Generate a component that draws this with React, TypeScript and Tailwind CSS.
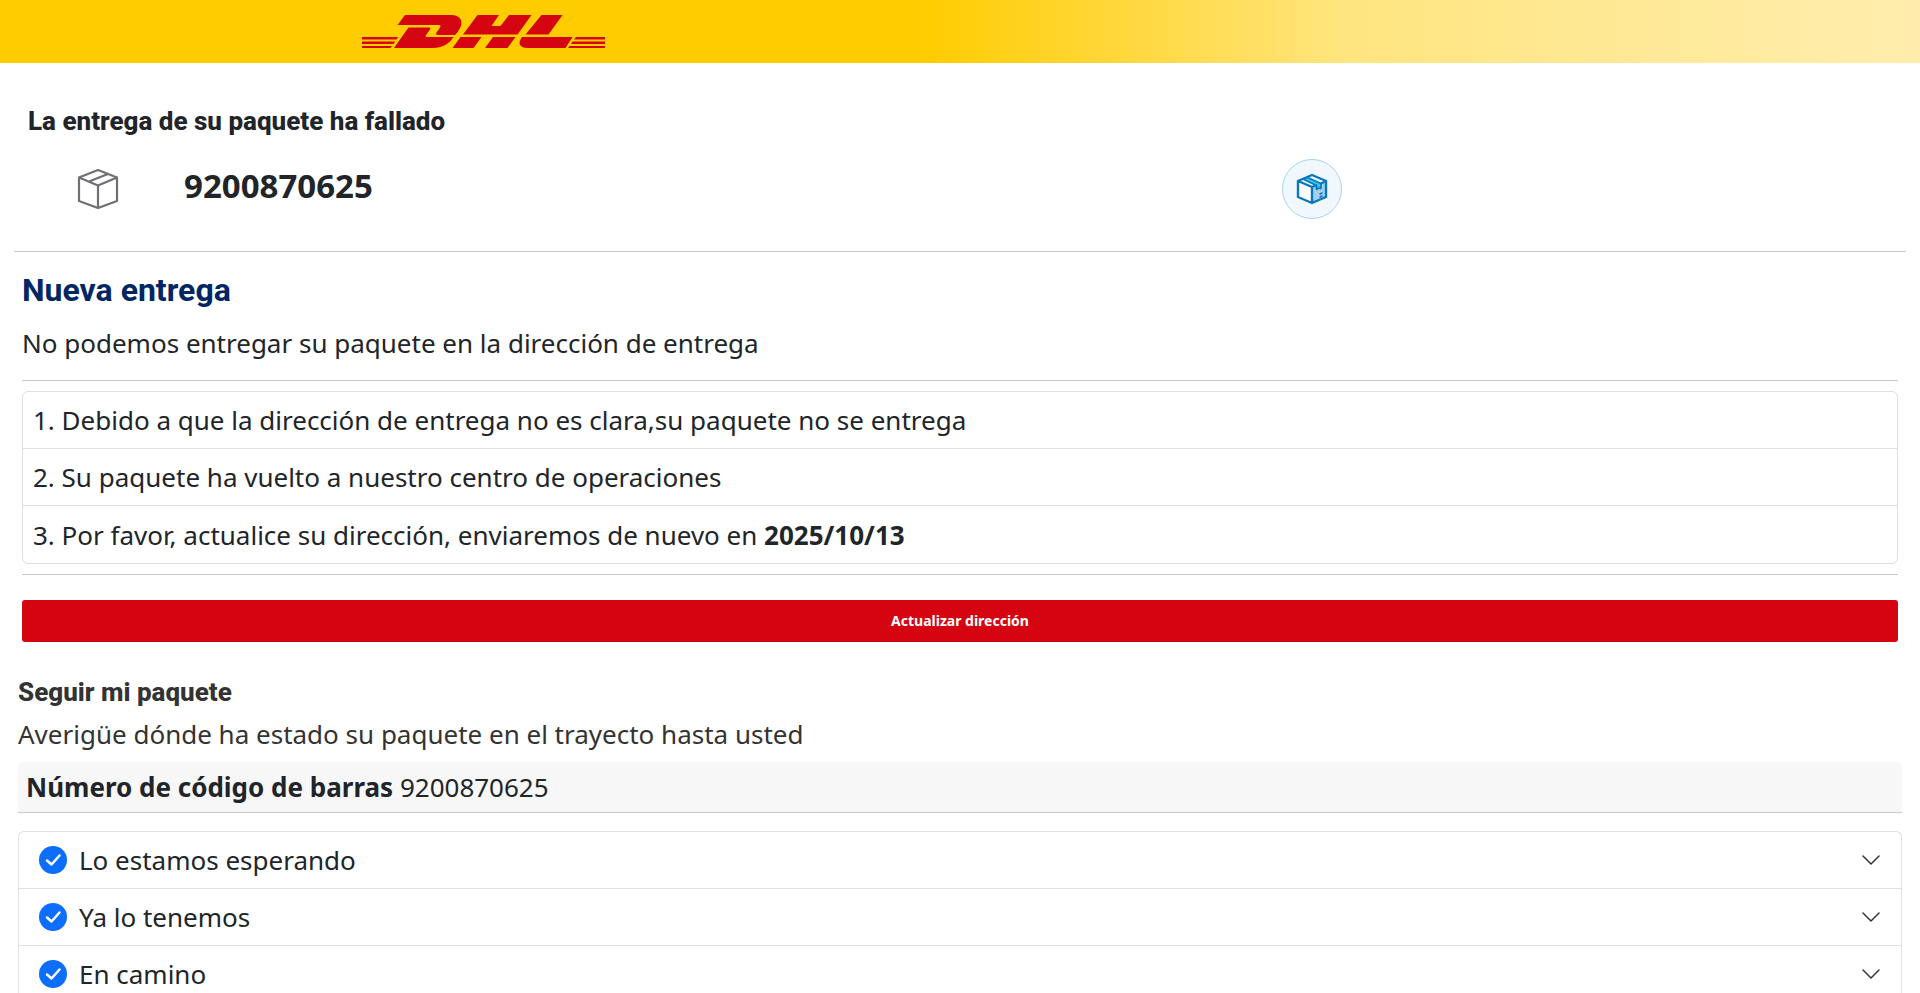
import { useState } from 'react'

interface Step {
  id: string
  title: string
}

const trackingNumber = '9200870625'

const steps: Step[] = [
  { id: 'waiting', title: 'Lo estamos esperando' },
  { id: 'received', title: 'Ya lo tenemos' },
  { id: 'transit', title: 'En camino' },
]

function Logo() {
  return (
    <svg className="block h-[34px] w-[244px]" viewBox="0 0 244 34" fill="#d40511" role="img" aria-label="DHL">
      <path d="M43 0H89C99 0 101.500 7 98 13C96.500 16 95 18 93 20H76C74 20 73.500 19 74.500 17.500L78 12.500C79 11 78.500 10 77 10H35.500Z" />
      <path d="M46.500 12.500H67C68.500 12.500 68.500 13.500 68 14.500L64 20C63 21.500 63.500 22 65.500 22H91.500C87 29 80 33 71 33H32Z" />
      <path d="M115.500 0H137L129.500 11H138.500L147 0H169.500L155.500 19.500H101Z" />
      <path d="M98.500 22H119.500L111.500 33H90.500Z" />
      <path d="M131 22H153.500L145.500 33H123Z" />
      <path d="M179.500 0H200.500L186.500 19.500H163.500Z" />
      <path d="M160 22H210.500L203.500 33H166C157 33 155.500 28 160 22Z" />
      <path d="M0 22H36L34.500 24.500H0ZM0 26.500H33L31.500 29H0ZM0 31H30L28.500 33H0Z" />
      <path d="M214 22H243V24.500H212ZM210.500 26.500H243V29H209ZM207.500 31H243V33H206Z" />
    </svg>
  )
}

function BoxIcon() {
  return (
    <svg className="h-10 w-[42px]" viewBox="0 0 42 40" fill="none" stroke="#6f7073" strokeWidth="2.200" strokeLinejoin="round">
      <path d="M21 1L40 8.500V32L21 39L2 32V8.500Z" />
      <path d="M2 8.500L21 16.500L40 8.500M21 16.500V39M12 12.500L31 5" />
    </svg>
  )
}

function BlueBoxIcon() {
  return (
    <svg className="h-8 w-8" viewBox="0 0 32 32" fill="none" strokeLinejoin="round" strokeLinecap="round">
      <path d="M2 8L16 14V30L2 24Z" fill="#fff" />
      <path d="M16 14L30 8V24L16 30Z" fill="#a5d0ec" />
      <path d="M6.500 6.500L11 4.500L25 11V15L22.500 14L20.500 15.500V13Z" fill="#2fc7ee" />
      <path d="M16 2L30 8V24L16 30L2 24V8ZM2 8L16 14L20 12.500M25 10.500L30 8M16 14V30" stroke="#0b76bc" strokeWidth="2.400" />
      <path d="M7 6L20.500 12.500V16.500L22.500 15L25 15.500V10.500L11.500 4.500" stroke="#0b76bc" strokeWidth="1.600" />
      <path d="M24 21L26 20M24 24L26 23" stroke="#0b76bc" strokeWidth="1.500" />
    </svg>
  )
}

function CheckIcon() {
  return (
    <svg className="h-7 w-7 shrink-0" viewBox="0 0 28 28" fill="none">
      <circle cx="14" cy="14" r="14" fill="#0d6efd" />
      <path d="M8 14.500L12.500 18.500L20.500 9.500" stroke="#fff" strokeWidth="2.500" strokeLinecap="round" strokeLinejoin="round" />
    </svg>
  )
}

function StepRow({ step }: { step: Step }) {
  const [isOpen, setIsOpen] = useState(false)

  return (
    <li className="border-b border-[#dfdfdf]">
      <button
        type="button"
        aria-expanded={isOpen}
        onClick={() => setIsOpen(!isOpen)}
        className="flex h-14 w-full items-center gap-3 pr-5 pl-5 text-left"
      >
        <CheckIcon />
        <span className="flex-1">{step.title}</span>
        <svg
          className={`h-5 w-5 ${isOpen ? 'rotate-180' : 'rotate-0'}`}
          viewBox="0 0 20 20"
          fill="none"
          stroke="#333"
          strokeWidth="1.500"
          strokeLinecap="round"
          strokeLinejoin="round"
        >
          <path d="M2 6L10 14L18 6" />
        </svg>
      </button>
    </li>
  )
}

export default function App() {
  return (
    <div className="bg-white font-['Noto_Sans',sans-serif] text-[26px] leading-10 text-[#212529]">
      <header className="flex h-[63px] items-start bg-[linear-gradient(90deg,#ffcc00_0%,#ffcc00_48%,#ffe57f_70%,#ffedae_100%)] pt-[15px] pl-[362px]">
        <Logo />
      </header>

      <main>
        <section className="mx-3.5 border-b border-[#c8c8c8] pt-[38px] pb-8">
          <h1 className="pl-3.5 font-[Roboto,sans-serif] text-[26px] font-extrabold">La entrega de su paquete ha fallado</h1>
          <div className="mt-[18px] flex h-[60px] items-center">
            <div className="flex w-[170px] pl-[63px]">
              <BoxIcon />
            </div>
            <strong className="flex-1 pb-1.5 text-[33px] font-bold">{trackingNumber}</strong>
            <div className="w-[33%]">
              <div className="flex h-[60px] w-[60px] items-center justify-center rounded-full border border-[#a9d3ea] bg-[#f1f8fd]">
                <BlueBoxIcon />
              </div>
            </div>
          </div>
        </section>

        <section className="mx-[22px] pt-[18px]">
          <h2 className="font-[Roboto,sans-serif] text-[32px] font-bold text-[#002663]">Nueva entrega</h2>
          <p className="mt-[13px] border-b border-[#c8c8c8] pb-[17px]">No podemos entregar su paquete en la dirección de entrega</p>
          <ol className="my-2.5 rounded-md border border-[#dfdfdf]">
            <li className="border-b border-[#dfdfdf] px-2.5 py-2">1. Debido a que la dirección de entrega no es clara,su paquete no se entrega</li>
            <li className="border-b border-[#dfdfdf] px-2.5 py-2">2. Su paquete ha vuelto a nuestro centro de operaciones</li>
            <li className="px-2.5 pt-[9px] pb-2">
              3. Por favor, actualice su dirección, enviaremos de nuevo en <b>2025/10/13</b>
            </li>
          </ol>
          <hr className="border-[#c8c8c8]" />
          <button type="button" className="mt-[25px] block h-[42px] w-full rounded-[3px] bg-[#d40511] text-sm font-bold text-white">
            Actualizar dirección
          </button>
        </section>

        <section className="mx-[18px] pt-[30px] text-[#333]">
          <h2 className="font-[Roboto,sans-serif] text-[26px] font-extrabold">Seguir mi paquete</h2>
          <p className="mt-0.5">Averigüe dónde ha estado su paquete en el trayecto hasta usted</p>
          <p className="mt-2 rounded-t-md border-b border-[#c8c8c8] bg-[#f7f7f7] px-2 py-[5px] text-[#212529]">
            <b>Número de código de barras</b> {trackingNumber}
          </p>
          <ul className="mt-[18px] rounded-t-md border-x border-t border-[#dfdfdf] text-[#212529]">
            {steps.map((step) => (
              <StepRow key={step.id} step={step} />
            ))}
          </ul>
        </section>
      </main>
    </div>
  )
}
